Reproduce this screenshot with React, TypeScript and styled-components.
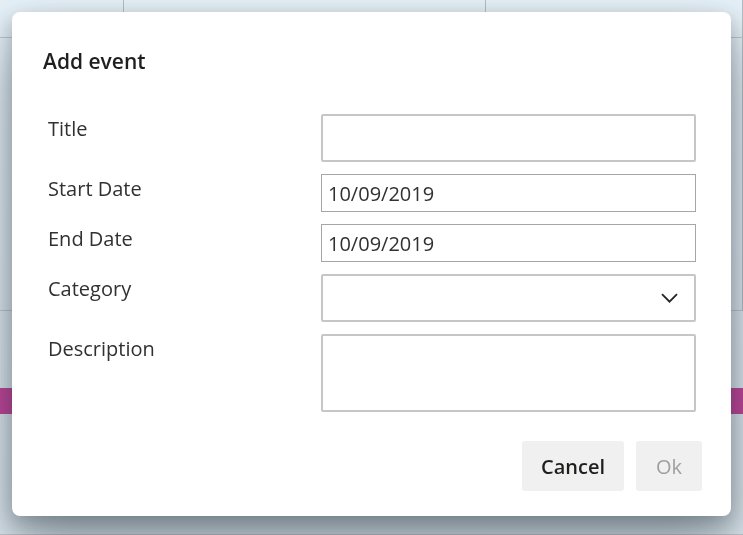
import React from "react"
import styled, { createGlobalStyle } from "styled-components"

const GlobalStyle = createGlobalStyle`
  html, body {
    margin: 0;
    height: 100%;
    overflow: hidden;
  }
  body {
    font-family: "Open Sans", "Noto Sans", sans-serif;
    background: #e4eef5;
  }
  #root {
    height: 100%;
  }
`

const Calendar = styled.div`
  height: 100%;
  display: grid;
  grid-template-columns: 124px 362px 1fr;
  grid-template-rows: 38px 273px 1fr;
  background: linear-gradient(180deg, #e6f1f8 0%, #dde8ef 100%);
`

const Cell = styled.div`
  box-sizing: border-box;
  border-right: 1px solid #b4bdc4;
  border-bottom: 1px solid #c3c8cc;
`

const EventBar = styled.div`
  grid-column: 1 / -1;
  grid-row: 3;
  align-self: start;
  margin-top: 77px;
  height: 26px;
  background: #c5459b;
`

const Overlay = styled.div`
  position: fixed;
  inset: 0;
  display: flex;
  justify-content: center;
  align-items: flex-start;
  padding-top: 12px;
`

const Dialog = styled.div`
  box-sizing: border-box;
  width: 719px;
  height: 504px;
  background: #ffffff;
  border-radius: 8px;
  padding: 35px 29px 25px 31px;
  box-shadow: 0 30px 60px rgba(30, 45, 55, 0.42), 0 8px 20px rgba(20, 30, 40, 0.28);
  display: flex;
  flex-direction: column;
`

const Heading = styled.h2`
  margin: 0 0 39px;
  font-size: 21px;
  line-height: 28px;
  font-weight: 600;
  color: #201f1e;
`

const Form = styled.div`
  display: grid;
  grid-template-columns: 273px 375px;
  row-gap: 12px;
  padding-left: 5px;
`

const Label = styled.label`
  padding-top: 1px;
  font-size: 20px;
  line-height: 28px;
  color: #323130;
`

const Box = styled.div<{ $h: number }>`
  box-sizing: border-box;
  height: ${p => p.$h}px;
  border: 2px solid #c8c6c4;
  border-radius: 2px;
  background: #fff;
`

const DateInput = styled.input`
  box-sizing: border-box;
  height: 38px;
  width: 100%;
  margin: 0;
  border: 1px solid #a6a6a6;
  border-radius: 0;
  padding: 1px 6px 0;
  font-family: inherit;
  font-size: 20px;
  line-height: 28px;
  color: #323130;
  outline: none;
`

const Select = styled(Box)`
  display: flex;
  align-items: center;
  justify-content: flex-end;
  padding-right: 16px;
`

const Footer = styled.div`
  display: flex;
  justify-content: flex-end;
  gap: 12px;
  margin-top: 29px;
`

const Button = styled.button<{ $disabled?: boolean }>`
  height: 50px;
  min-width: 66px;
  padding: 1px 19px 0;
  border: none;
  border-radius: 3px;
  background: #f0f0f0;
  font-family: inherit;
  font-size: 20px;
  font-weight: ${p => (p.$disabled ? 400 : 600)};
  color: ${p => (p.$disabled ? "#a19f9d" : "#201f1e")};
`

const Chevron = () => (
  <svg width="17" height="10" viewBox="0 0 17 10">
    <path d="M1 1.2 L8.5 8.7 L16 1.2" fill="none" stroke="#252423" strokeWidth="1.8" />
  </svg>
)

export default function App() {
  return (
    <>
      <GlobalStyle />
      <Calendar>
        {Array.from({ length: 9 }).map((_, i) => (
          <Cell key={i} />
        ))}
        <EventBar />
      </Calendar>
      <Overlay>
        <Dialog>
          <Heading>Add event</Heading>
          <Form>
            <Label>Title</Label>
            <Box $h={48} />
            <Label>Start Date</Label>
            <DateInput defaultValue="10/09/2019" readOnly />
            <Label>End Date</Label>
            <DateInput defaultValue="10/09/2019" readOnly />
            <Label>Category</Label>
            <Select $h={48}>
              <Chevron />
            </Select>
            <Label>Description</Label>
            <Box $h={78} />
          </Form>
          <Footer>
            <Button>Cancel</Button>
            <Button $disabled>Ok</Button>
          </Footer>
        </Dialog>
      </Overlay>
    </>
  )
}
